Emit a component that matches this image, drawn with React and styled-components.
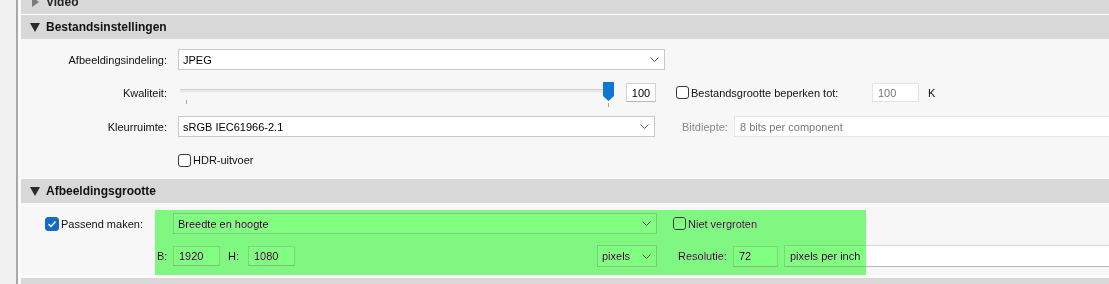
import React from 'react';
import styled, { createGlobalStyle } from 'styled-components';

const Global = createGlobalStyle`
  * { box-sizing: border-box; }
  html, body { margin: 0; padding: 0; background: #f0f0f0; }
  body {
    font-family: "Liberation Sans", Arial, sans-serif;
    font-size: 11px;
    color: #111;
  }
`;

const Frame = styled.div`
  display: flex;
  width: 1109px;
  height: 284px;
  overflow: hidden;
  background: #f0f0f0;
`;

const Gutter = styled.div`
  flex: none;
  width: 18px;
  background: #f0f0f0;
  border-right: 2px solid #a9a9a9;
`;

const Spacer = styled.div`
  flex: none;
  width: 3px;
  background: #fbfbfb;
`;

const Main = styled.div`
  flex: 1;
  min-width: 0;
  display: flex;
  flex-direction: column;
`;

const Clip = styled.div`
  height: 14px;
  overflow: hidden;
  flex: none;
`;

const Header = styled.div`
  flex: none;
  height: ${p => (p.$noBorder ? 24 : 25)}px;
  margin-top: ${p => p.$shift || 0}px;
  display: flex;
  align-items: center;
  gap: 6px;
  padding-left: 9px;
  background: #d8d8d8;
  border-top: ${p => (p.$noBorder ? 'none' : '1px solid #fdfdfd')};
  font-size: 12px;
  font-weight: bold;
  color: ${p => (p.$muted ? '#222' : '#111')};
`;

const Triangle = styled.svg`
  flex: none;
  display: block;
`;

const Body = styled.div`
  position: relative;
  flex: none;
  height: ${p => p.$h}px;
  padding-top: 10px;
  background: #f7f7f7;
  border-bottom: ${p => (p.$bottom ? `${p.$bottom}px solid #fdfdfd` : 'none')};
`;

const Row = styled.div`
  display: flex;
  align-items: center;
  height: ${p => p.$h}px;
  margin-top: ${p => p.$mt || 0}px;
`;

const Label = styled.div`
  flex: none;
  width: ${p => p.$w || 146}px;
  margin-right: ${p => (p.$mr === undefined ? 11 : p.$mr)}px;
  margin-left: ${p => p.$ml || 0}px;
  text-align: ${p => p.$align || 'right'};
  color: ${p => (p.$disabled ? '#8a8a8a' : '#111')};
  white-space: nowrap;
`;

const SelectBox = styled.div`
  flex: none;
  display: flex;
  align-items: center;
  justify-content: space-between;
  width: ${p => p.$w}px;
  height: ${p => p.$h || 21}px;
  margin-left: ${p => p.$ml || 0}px;
  padding: 0 5px 0 4px;
  background: #fff;
  border: 1px solid #c8c8c8;
  color: #000;
  white-space: nowrap;
`;

const TextBox = styled.div`
  flex: ${p => (p.$grow ? 1 : 'none')};
  display: flex;
  align-items: center;
  justify-content: ${p => (p.$center ? 'center' : 'flex-start')};
  width: ${p => (p.$w ? `${p.$w}px` : 'auto')};
  height: ${p => p.$h || 20}px;
  margin-left: ${p => p.$ml || 0}px;
  padding-left: ${p => (p.$center ? 0 : 5)}px;
  background: #fff;
  border: 1px solid ${p => (p.$disabled ? '#e4e4e4' : '#d4d4d4')};
  border-bottom-color: ${p => (p.$disabled ? '#e4e4e4' : '#b8b8b8')};
  border-right: ${p => (p.$open ? 'none' : undefined)};
  color: ${p => (p.$disabled ? '#777' : '#000')};
  white-space: nowrap;
`;

const Check = styled.div`
  flex: none;
  display: flex;
  align-items: center;
  justify-content: center;
  width: ${p => (p.$on ? 14 : 13)}px;
  height: ${p => (p.$on ? 14 : 13)}px;
  margin-left: ${p => p.$ml || 0}px;
  border-radius: 3px;
  background: ${p => (p.$on ? '#1769c4' : '#fff')};
  border: 1px solid ${p => (p.$on ? '#1769c4' : '#3a3a3a')};
`;

const CheckText = styled.span`
  flex: none;
  width: ${p => (p.$w ? `${p.$w}px` : 'auto')};
  margin-left: 2px;
  color: #111;
  white-space: nowrap;
`;

const Plain = styled.span`
  flex: none;
  margin-left: ${p => p.$ml || 0}px;
  width: ${p => (p.$w ? `${p.$w}px` : 'auto')};
  color: ${p => (p.$disabled ? '#8a8a8a' : '#111')};
  white-space: nowrap;
`;

const Slider = styled.div`
  position: relative;
  flex: none;
  width: 438px;
  height: 19px;
`;

const Track = styled.div`
  position: absolute;
  left: 2px;
  right: 6px;
  top: 6px;
  height: 4px;
  background: #e8e8e8;
  border-top: 1px solid #d2d2d2;
  border-bottom: 1px solid #f2f2f2;
`;

const Thumb = styled.svg`
  position: absolute;
  left: 425px;
  top: -1px;
  display: block;
`;

const Tick = styled.div`
  position: absolute;
  left: ${p => p.$x}px;
  top: ${p => p.$y}px;
  width: 1px;
  height: 4px;
  background: #a8a8a8;
`;

const Highlight = styled.div`
  position: absolute;
  left: 134px;
  top: 7px;
  width: 711px;
  height: 65px;
  background: #80ff80;
  mix-blend-mode: darken;
  pointer-events: none;
`;

const Chevron = () => (
  <svg width="9" height="5" viewBox="0 0 9 5" style={{ display: 'block' }}>
    <polyline points="0.5,0.5 4.5,4.5 8.5,0.5" fill="none" stroke="#555" strokeWidth="1" />
  </svg>
);

const Tick2 = () => (
  <svg width="10" height="8" viewBox="0 0 10 8" style={{ display: 'block' }}>
    <polyline points="1.5,4 4,6.5 8.5,1.5" fill="none" stroke="#fff" strokeWidth="1.4" />
  </svg>
);

const Down = ({ color = '#2a2a2a' }) => (
  <Triangle width="10" height="9" viewBox="0 0 10 9">
    <polygon points="0,0 10,0 5,9" fill={color} />
  </Triangle>
);

const Right = () => (
  <Triangle width="10" height="10" viewBox="0 0 10 10">
    <polygon points="2,0 9,5 2,10" fill="#7a7a7a" />
  </Triangle>
);

export default function App() {
  return (
    <>
      <Global />
      <Frame>
        <Gutter />
        <Spacer />
        <Main>
          <Clip>
            <Header $noBorder $shift={-10} $muted>
              <Right />
              <span>Video</span>
            </Header>
          </Clip>

          <Header>
            <Down />
            <span>Bestandsinstellingen</span>
          </Header>
          <Body $h={139}>
            <Row $h={21}>
              <Label>Afbeeldingsindeling:</Label>
              <SelectBox $w={487}>
                <span>JPEG</span>
                <Chevron />
              </SelectBox>
            </Row>
            <Row $h={19} $mt={13}>
              <Label>Kwaliteit:</Label>
              <Slider>
                <Track />
                <Tick $x={8} $y={17} />
                <Tick $x={430} $y={20} />
                <Thumb width="11" height="19" viewBox="0 0 11 19">
                  <polygon points="0,0 11,0 11,14 5.5,19 0,14" fill="#0a78d4" />
                </Thumb>
              </Slider>
              <TextBox $w={30} $h={19} $ml={10} $center>100</TextBox>
              <Check $ml={20} />
              <CheckText $w={181}>Bestandsgrootte beperken tot:</CheckText>
              <TextBox $w={47} $h={19} $disabled>100</TextBox>
              <Plain $ml={9}>K</Plain>
            </Row>
            <Row $h={21} $mt={14}>
              <Label>Kleurruimte:</Label>
              <SelectBox $w={477}>
                <span>sRGB IEC61966-2.1</span>
                <Chevron />
              </SelectBox>
              <Plain $ml={27} $w={52} $disabled>Bitdiepte:</Plain>
              <TextBox $grow $open $disabled $h={21}>8 bits per component</TextBox>
            </Row>
            <Row $h={20} $mt={13}>
              <Label />
              <Check />
              <CheckText>HDR-uitvoer</CheckText>
            </Row>
          </Body>

          <Header>
            <Down />
            <span>Afbeeldingsgrootte</span>
          </Header>
          <Body $h={75} $bottom={3}>
            <Row $h={21}>
              <Check $on $ml={24}>
                <Tick2 />
              </Check>
              <CheckText $w={112}>Passend maken:</CheckText>
              <SelectBox $w={484}>
                <span>Breedte en hoogte</span>
                <Chevron />
              </SelectBox>
              <Check $ml={16} />
              <CheckText>Niet vergroten</CheckText>
            </Row>
            <Row $h={22} $mt={11}>
              <Plain $ml={136} $w={16}>B:</Plain>
              <TextBox $w={47}>1920</TextBox>
              <Plain $ml={8} $w={20}>H:</Plain>
              <TextBox $w={47}>1080</TextBox>
              <SelectBox $w={60} $h={22} $ml={302}>
                <span>pixels</span>
                <Chevron />
              </SelectBox>
              <Plain $ml={21} $w={55}>Resolutie:</Plain>
              <TextBox $w={45} $h={21}>72</TextBox>
              <TextBox $grow $open $h={22} $ml={6}>pixels per inch</TextBox>
            </Row>
            <Highlight />
          </Body>

          <Header $noBorder />
        </Main>
      </Frame>
    </>
  );
}
